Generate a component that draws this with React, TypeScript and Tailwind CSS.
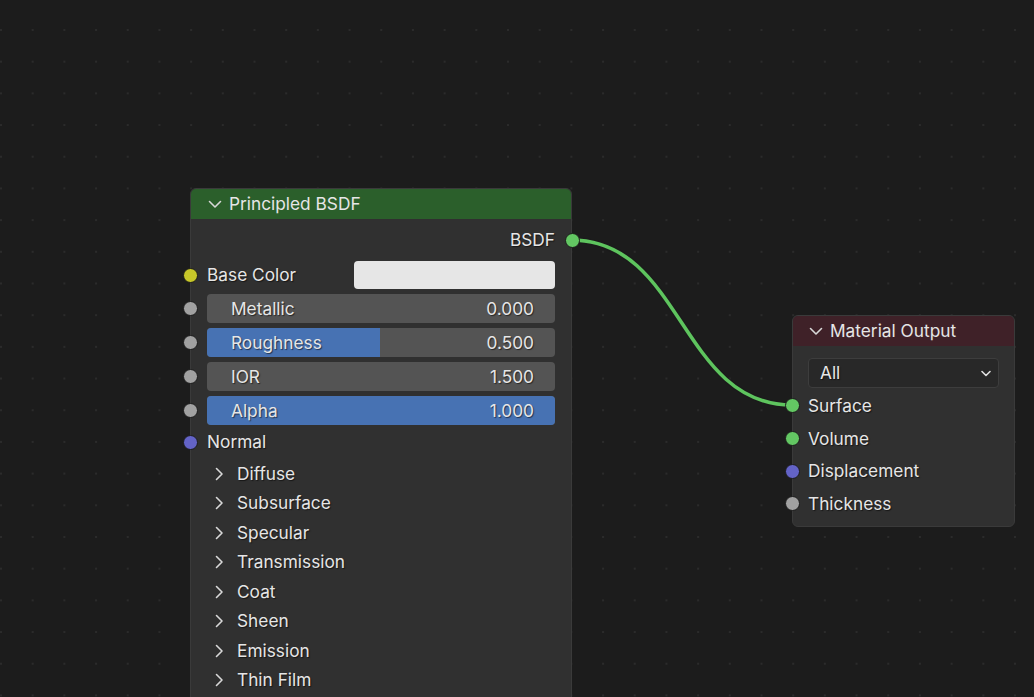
import React from "react";

const font = { fontFamily: "Inter, 'Noto Sans', sans-serif" };

function Socket({ color, className = "" }: { color: string; className?: string }) {
  return (
    <span
      className={`absolute top-1/2 -mt-[7.5px] block w-[15px] h-[15px] rounded-full border-[1.5px] border-[#1b1b1b] ${className}`}
      style={{ backgroundColor: color }}
    />
  );
}

function ChevronDown({ className = "" }: { className?: string }) {
  return (
    <svg width="14" height="9" viewBox="0 0 14 9" className={className}>
      <path d="M1.5 1.5 L7 7 L12.5 1.5" fill="none" stroke="#d8d8d8" strokeWidth="1.6" strokeLinecap="round" strokeLinejoin="round" />
    </svg>
  );
}

function ChevronRight() {
  return (
    <svg width="9" height="14" viewBox="0 0 9 14">
      <path d="M1.5 1.5 L7 7 L1.5 12.5" fill="none" stroke="#d8d8d8" strokeWidth="1.6" strokeLinecap="round" strokeLinejoin="round" />
    </svg>
  );
}

const shadow = "[text-shadow:1px_1px_1px_rgba(0,0,0,0.55)]";
const txt = "text-[17.3px] text-[#e6e6e6]";

function Slider({ label, value, frac }: { label: string; value: string; frac: number }) {
  return (
    <div className="relative h-[29px] flex items-center">
      <Socket color="#a1a1a1" className="left-[-24.5px]" />
      <div className="relative w-full h-full rounded-[4px] bg-[#545454] overflow-hidden">
        <div className="absolute left-0 top-0 bottom-0 bg-[#4772b3]" style={{ width: `${frac * 100}%` }} />
        <div className={`relative flex items-center justify-between h-full pl-[24px] pr-[21px] ${txt} ${shadow}`}>
          <span>{label}</span>
          <span>{value}</span>
        </div>
      </div>
    </div>
  );
}

export default function App() {
  const panels = ["Diffuse", "Subsurface", "Specular", "Transmission", "Coat", "Sheen", "Emission", "Thin Film"];
  const outs: [string, string][] = [
    ["Surface", "#63c763"],
    ["Volume", "#63c763"],
    ["Displacement", "#6363c7"],
    ["Thickness", "#a1a1a1"],
  ];
  return (
    <div
      className="relative w-[1034px] h-[697px] overflow-hidden bg-[#1c1c1c] bg-[radial-gradient(circle,#2b2b2b_1.1px,transparent_1.3px)] bg-[size:31.7px_31.7px] bg-[position:-14.85px_14.15px]"
      style={font}
    >
      {/* link */}
      <svg className="absolute inset-0" width="1034" height="697">
        <path d="M571 240 C 683 240, 680 405, 792 405" fill="none" stroke="#1a1a1a" strokeWidth="6" strokeOpacity="0.6" />
        <path d="M571 240 C 683 240, 680 405, 792 405" fill="none" stroke="#5ec45e" strokeWidth="3.6" />
      </svg>

      {/* Principled BSDF */}
      <div className="absolute left-[190px] top-[188px] w-[382px] h-[540px] rounded-[6px] border border-[#3a3a3a] bg-[#303030]">
        <div className={`h-[30px] flex items-center gap-[7px] pl-[17px] rounded-t-[5px] bg-[#2b5f2b] ${txt}`}>
          <ChevronDown />
          <span>Principled BSDF</span>
        </div>
        <div className="pt-[5px] px-[16px]">
          <div className={`relative h-[32px] flex items-center justify-end ${txt} ${shadow}`}>
            <span>BSDF</span>
            <Socket color="#63c763" className="right-[-24.5px]" />
          </div>
          <div className="relative h-[38px] flex items-center justify-between">
            <Socket color="#c7c729" className="left-[-24.5px]" />
            <span className={`${txt} ${shadow}`}>Base Color</span>
            <div className="w-[201px] h-[28px] rounded-[4px] bg-[#e6e6e6]" />
          </div>
          <div className="flex flex-col gap-[5px]">
            <Slider label="Metallic" value="0.000" frac={0} />
            <Slider label="Roughness" value="0.500" frac={0.496} />
            <Slider label="IOR" value="1.500" frac={0} />
            <Slider label="Alpha" value="1.000" frac={1} />
          </div>
          <div className={`relative h-[34px] flex items-center ${txt} ${shadow}`}>
            <Socket color="#6363c7" className="left-[-24.5px]" />
            <span>Normal</span>
          </div>
          {panels.map((p) => (
            <div key={p} className={`h-[29.5px] flex items-center gap-[13px] pl-[8px] ${txt} ${shadow}`}>
              <ChevronRight />
              <span>{p}</span>
            </div>
          ))}
        </div>
      </div>

      {/* Material Output */}
      <div className="absolute left-[792px] top-[315px] w-[223px] h-[212px] rounded-[6px] border border-[#3a3a3a] bg-[#303030]">
        <div className={`h-[30px] flex items-center gap-[7px] pl-[16px] rounded-t-[5px] bg-[#3f2128] ${txt}`}>
          <ChevronDown />
          <span>Material Output</span>
        </div>
        <div className="pt-[12px] px-[15px]">
          <div className={`h-[30px] rounded-[4px] border border-[#3d3d3d] bg-[#282828] flex items-center justify-between pl-[11px] pr-[7px] ${txt} ${shadow}`}>
            <span>All</span>
            <svg width="10" height="7" viewBox="0 0 10 7">
              <path d="M1 1.5 L5 5.5 L9 1.5" fill="none" stroke="#e0e0e0" strokeWidth="1.6" strokeLinecap="round" strokeLinejoin="round" />
            </svg>
          </div>
          <div className="pt-[1.5px]">
            {outs.map(([n, c]) => (
              <div key={n} className={`relative h-[32.7px] flex items-center ${txt} ${shadow}`}>
                <Socket color={c} className="left-[-23.5px]" />
                <span>{n}</span>
              </div>
            ))}
          </div>
        </div>
      </div>
    </div>
  );
}
